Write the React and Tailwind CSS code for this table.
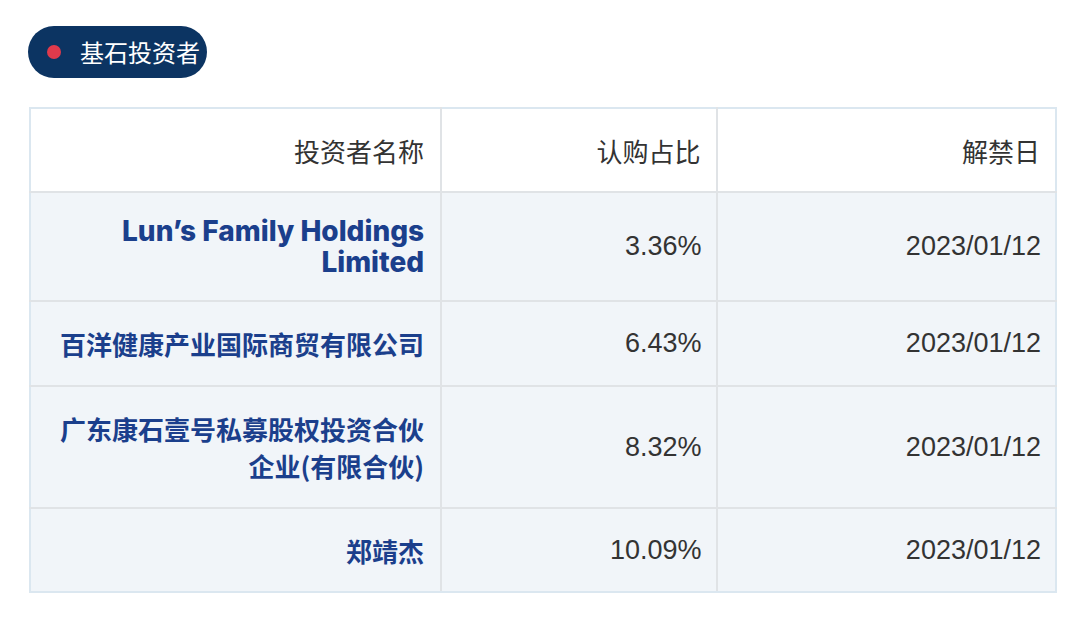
const rows = [
  { name: ['Lun’s Family Holdings', 'Limited'], latin: true, pct: '3.36%', date: '2023/01/12', h: 'h-[109px]' },
  { name: ['百洋健康产业国际商贸有限公司'], pct: '6.43%', date: '2023/01/12', h: 'h-[85px]' },
  { name: ['广东康石壹号私募股权投资合伙', '企业(有限合伙)'], pct: '8.32%', date: '2023/01/12', h: 'h-[122px]' },
  { name: ['郑靖杰'], pct: '10.09%', date: '2023/01/12', h: 'h-[84px]' },
];

export default function App() {
  return (
    <div className="w-[1080px] h-[623px] bg-white pt-[26px] pl-[28px] [font-family:'Noto_Sans_CJK_SC',sans-serif]">
      <div className="inline-flex items-center h-[52px] rounded-full bg-[#0c3462] pl-[19px] pr-[7px]">
        <span className="w-[14px] h-[14px] rounded-full bg-[#e03a4c]" />
        <span className="ml-[19px] text-[24px] leading-none text-white">基石投资者</span>
      </div>

      <table className="mt-[29px] ml-px w-[1028px] border-collapse border-2 border-[#dbe7f0] text-[26px] text-[#333]">
        <colgroup>
          <col className="w-[412px]" />
          <col className="w-[276px]" />
          <col className="w-[340px]" />
        </colgroup>
        <thead>
          <tr className="h-[84px] bg-white">
            <th className="font-normal text-right pr-[16px] border-2 border-[#e0e3e6] border-t-[#dbe7f0] border-l-[#dbe7f0]">投资者名称</th>
            <th className="font-normal text-right pr-[15px] border-2 border-[#e0e3e6] border-t-[#dbe7f0]">认购占比</th>
            <th className="font-normal text-right pr-[15px] border-2 border-[#e0e3e6] border-t-[#dbe7f0] border-r-[#dbe7f0]">解禁日</th>
          </tr>
        </thead>
        <tbody>
          {rows.map((r, i) => (
            <tr key={i} className={`${r.h} bg-[#f1f5f9]`}>
              <td
                className={`text-right pr-[16px] font-bold text-[#1b3f8c] border-2 border-[#e0e3e6] border-l-[#dbe7f0] ${i === rows.length - 1 ? 'border-b-[#dbe7f0]' : ''} ${r.latin ? "[font-family:Inter,sans-serif] font-extrabold text-[28px] leading-[31px]" : 'leading-[37px]'}`}
              >
                {r.name.map((l, j) => (
                  <div key={j}>{l}</div>
                ))}
              </td>
              <td className={`text-right pr-[14px] [font-family:'Liberation_Sans',sans-serif] text-[27px] border-2 border-[#e0e3e6] ${i === rows.length - 1 ? 'border-b-[#dbe7f0]' : ''}`}>{r.pct}</td>
              <td className={`text-right pr-[14px] [font-family:'Liberation_Sans',sans-serif] text-[27px] border-2 border-[#e0e3e6] border-r-[#dbe7f0] ${i === rows.length - 1 ? 'border-b-[#dbe7f0]' : ''}`}>{r.date}</td>
            </tr>
          ))}
        </tbody>
      </table>
    </div>
  );
}
